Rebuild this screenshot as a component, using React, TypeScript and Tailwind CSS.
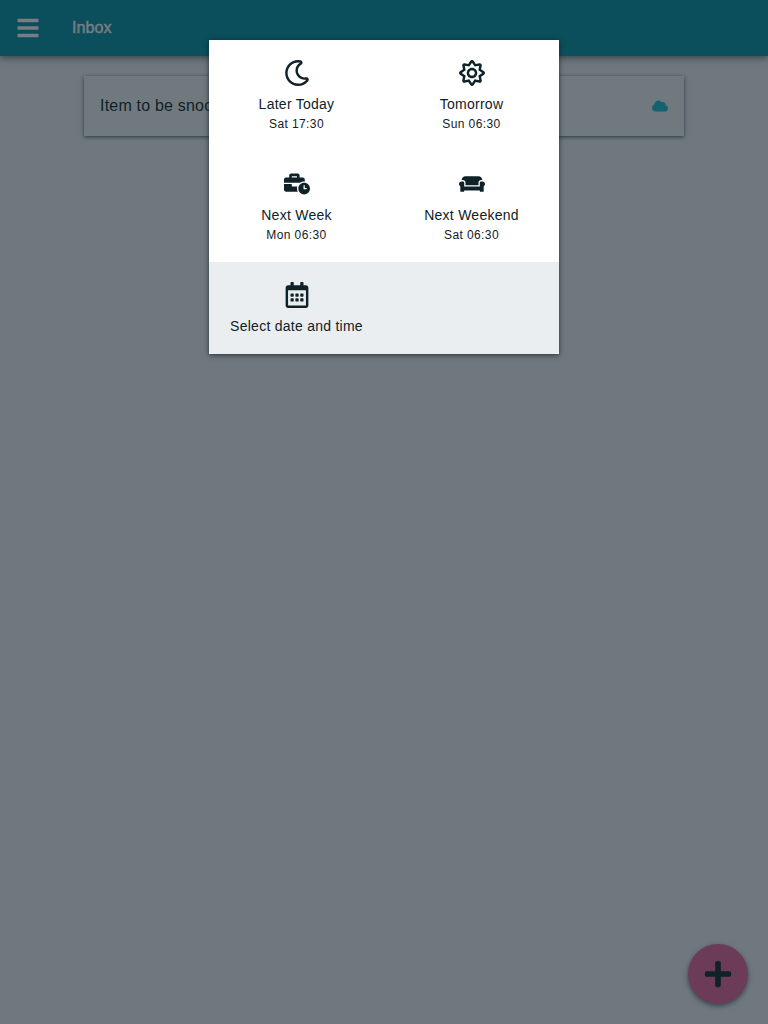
import type { ReactNode } from "react";
import {
  FaBars,
  FaBusinessTime,
  FaCloud,
  FaCouch,
  FaPlus,
  FaRegCalendarAlt,
  FaRegMoon,
  FaRegSun,
} from "react-icons/fa";

type OptionProps = { icon: ReactNode; label: string; time?: string };

function SnoozeOption({ icon, label, time }: OptionProps) {
  return (
    <button className="flex w-[175px] flex-col items-center pt-5 text-[#0f2228]">
      <span className="flex h-[26px] items-center text-[26px]">{icon}</span>
      <span className="mt-2 text-[14px] leading-5 tracking-[0.26px] whitespace-nowrap">{label}</span>
      {time && <span className="text-[12px] leading-5 tracking-[0.4px] whitespace-nowrap">{time}</span>}
    </button>
  );
}

export default function App() {
  return (
    <div className="relative h-screen overflow-hidden bg-[#70787f] font-['Liberation_Sans',Arial,sans-serif] text-[#0f2228]">
      <header className="flex h-14 items-center bg-[#0b4f5c] pl-4 text-[#767e83] shadow-[0_1px_8px_rgba(15,34,40,0.75)]">
        <FaBars className="h-6 w-6" />
        <h1 className="ml-8 text-[16px] leading-6 tracking-[0.1px] [-webkit-text-stroke:0.5px_#767e83]">Inbox</h1>
      </header>
      <main className="mx-auto mt-5 w-[600px]">
        <article className="flex h-[60px] items-center justify-between bg-[#70797e] px-4 shadow-[0_1px_4px_rgba(15,34,40,0.75)]">
          <p className="text-[16px] tracking-[0.2px]">Item to be snoozed</p>
          <FaCloud className="size-4 text-[#14626f]" />
        </article>
      </main>
      <button aria-label="Add item" className="absolute right-5 bottom-5 flex size-[60px] items-center justify-center rounded-full bg-[#6c3b57] shadow-[0_2px_5px_rgba(15,34,40,0.6)]">
        <FaPlus className="size-[30px]" />
      </button>
      <section role="dialog" className="absolute top-10 left-[209px] w-[350px] bg-white shadow-[0_1px_5px_rgba(15,34,40,0.8)]">
        <div className="grid h-[222px] grid-cols-2 grid-rows-2">
          <SnoozeOption icon={<FaRegMoon />} label="Later Today" time="Sat 17:30" />
          <SnoozeOption icon={<FaRegSun />} label="Tomorrow" time="Sun 06:30" />
          <SnoozeOption icon={<FaBusinessTime />} label="Next Week" time="Mon 06:30" />
          <SnoozeOption icon={<FaCouch />} label="Next Weekend" time="Sat 06:30" />
        </div>
        <div className="h-[92px] bg-[#eaeef1]">
          <SnoozeOption icon={<FaRegCalendarAlt />} label="Select date and time" />
        </div>
      </section>
    </div>
  );
}
